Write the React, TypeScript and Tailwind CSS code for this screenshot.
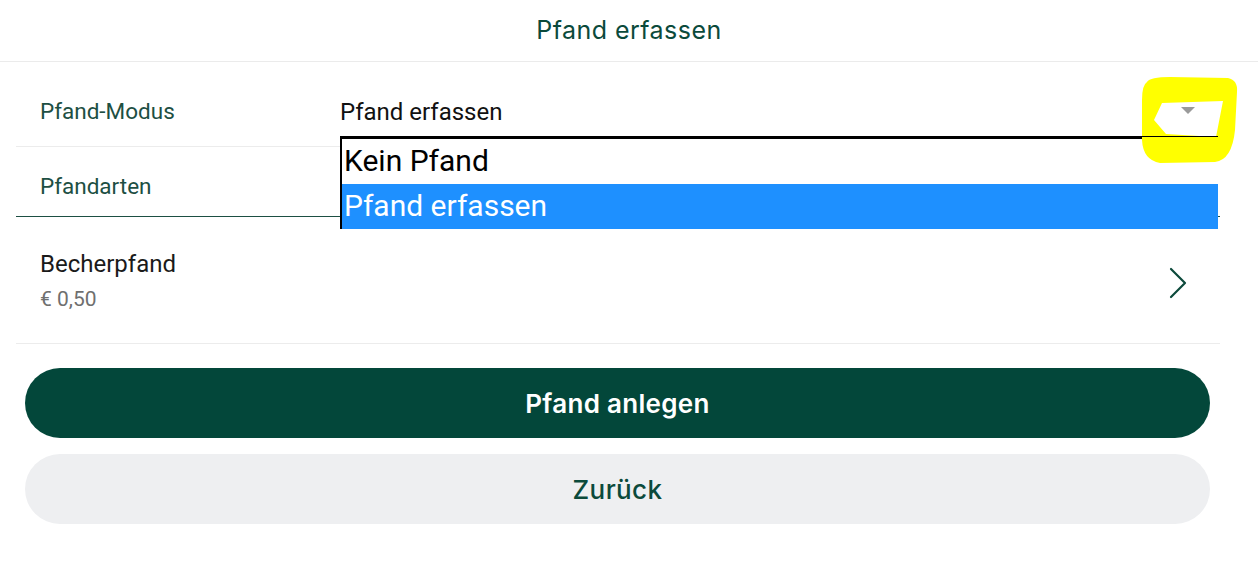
import React from "react";

export default function App() {
  return (
    <div className="relative w-[1258px] h-[586px] bg-white overflow-hidden" style={{ fontFamily: "Roboto, 'Noto Sans', sans-serif" }}>
      {/* Header */}
      <div className="h-[62px] flex items-center justify-center border-b border-[#ebebeb]">
        <span className="text-[25px] text-[#0b4a3b] tracking-[0.45px]" style={{ fontFamily: "Inter, 'Noto Sans', sans-serif" }}>
          Pfand erfassen
        </span>
      </div>

      <div className="pl-4 pr-[38px]">
        {/* Row 1 */}
        <div className="h-[85px] flex border-b border-[#ececec]">
          <div className="w-[324px] pl-6 pt-[16px] flex items-center text-[22.5px] text-[#1d4f43]">Pfand-Modus</div>
          <div className="flex-1 relative">
            <div className="h-full flex items-center text-[24px] text-[#111] pt-[16px]">Pfand erfassen</div>
          </div>
        </div>
        {/* Row 2 */}
        <div className="h-[70px] flex items-center border-b border-[#1d4f43] pl-6 pt-[10px] text-[22.5px] text-[#1d4f43]">Pfandarten</div>
        {/* Row 3 */}
        <div className="h-[127px] flex items-center justify-between border-b border-[#ececec] pl-6 pr-[33px]">
          <div className="flex flex-col">
            <span className="text-[24px] text-[#1a1a1a] leading-[30px]">Becherpfand</span>
            <span className="text-[21px] text-[#6f6f6f] leading-[26px] mt-[7px]">€ 0,50</span>
          </div>
          <svg width="18" height="32" viewBox="0 0 18 32" className="mt-[6px]">
            <path d="M2 2 L16 16 L2 30" fill="none" stroke="#0d4a3c" strokeWidth="2.2" strokeLinecap="round" strokeLinejoin="round" />
          </svg>
        </div>
      </div>

      {/* Buttons */}
      <div className="pl-[25px] pr-[48px] pt-[24px] flex flex-col gap-[16px]" style={{ fontFamily: "Inter, 'Noto Sans', sans-serif" }}>
        <button className="h-[70px] rounded-full bg-[#03473a] text-white text-[26px] font-semibold tracking-[0.3px]">Pfand anlegen</button>
        <button className="h-[70px] rounded-full bg-[#eeeff1] text-[#0b4a3b] text-[26px] font-medium tracking-[0.4px]">Zurück</button>
      </div>

      {/* Dropdown list overlay */}
      <div className="absolute left-[340px] top-[137px] w-[878px] h-[92px] bg-white border-l-2 border-t-2 border-black z-20 flex flex-col">
        <div className="h-[45px] flex items-center pl-[2px] pb-[3px] text-[30px] text-black">Kein Pfand</div>
        <div className="h-[45px] flex items-center pl-[2px] pb-[3px] text-[30px] text-white bg-[#1e90ff]">Pfand erfassen</div>
      </div>

      {/* Yellow annotation */}
      <svg className="absolute left-0 top-0 pointer-events-none z-30" width="1258" height="586">
        <path
          fillRule="evenodd"
          fill="#ffff00"
          d="M1147 82 Q1150 77 1170 77 L1228 78 Q1238 80 1237 92 L1235 130 Q1232 160 1215 162 L1160 163 Q1143 160 1142 140 L1142 100 Q1142 85 1147 82 Z M1162 103 L1223 101 L1216 137 L1166 134 L1154 120 Z"
        />
      </svg>

      {/* Select underline and arrow (over annotation) */}
      <div className="absolute left-[340px] top-[136px] w-[878px] h-[1px] bg-black z-40" />
      <div className="absolute left-[1181px] top-[107px] w-0 h-0 border-l-[7px] border-r-[7px] border-t-[7px] border-l-transparent border-r-transparent border-t-[#9a9a9a] z-40" />
    </div>
  );
}
